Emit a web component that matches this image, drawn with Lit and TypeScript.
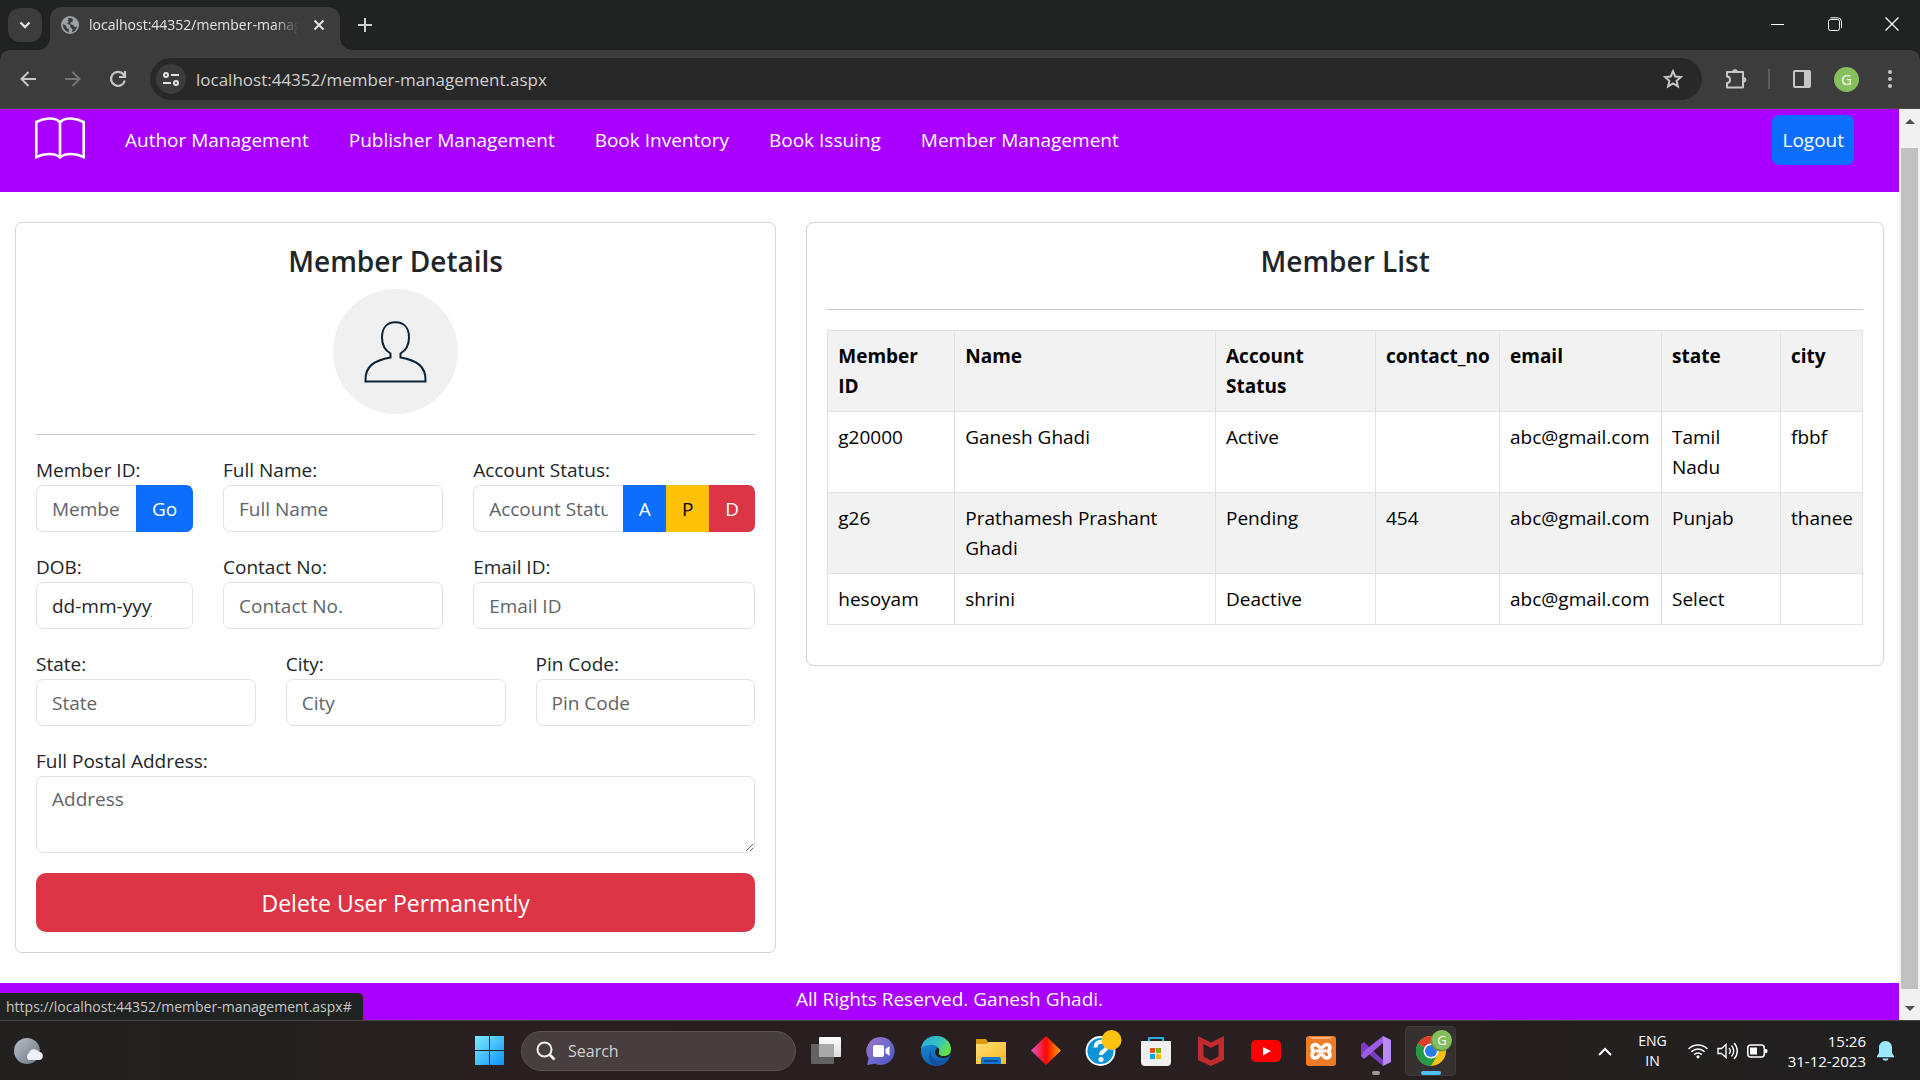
import { LitElement, html, css, svg } from "lit";
import { customElement } from "lit/decorators.js";

const base = css`
  *, *::before, *::after { box-sizing: border-box; }
  button, input, textarea { font: inherit; color: inherit; margin: 0; }
  button { border: 0; background: none; padding: 0; }
  a { color: inherit; text-decoration: none; }
  svg { display: block; flex: none; }
`;

@customElement("browser-bar")
class BrowserBar extends LitElement {
  static styles = [base, css`
    :host { display: block; background: #202322; color: #c7c7c7; font-size: 14px; }
    .tabs { display: flex; height: 50px; padding: 7px 0 0 8px; }
    .chevron { width: 34px; height: 34px; margin-top: 1px; border-radius: 12px; background: #3c3c3c; display: grid; place-items: center; }
    .tab { position: relative; display: flex; align-items: center; width: 290px; height: 43px; margin-left: 8px; padding: 0 11px 7px; gap: 10px;
      border-radius: 12px 12px 0 0; background: #3c3c3c; color: #e3e3e3; }
    .tab::before, .tab::after { content: ""; position: absolute; bottom: 0; width: 12px; height: 12px; }
    .tab::before { left: -12px; background: radial-gradient(circle at 0 0, transparent 12px, #3c3c3c 12px); }
    .tab::after { right: -12px; background: radial-gradient(circle at 100% 0, transparent 12px, #3c3c3c 12px); }
    .title { flex: 1; min-width: 0; overflow: hidden; white-space: nowrap; font-size: 14px; line-height: 36px;
      -webkit-mask-image: linear-gradient(90deg, #000 88%, transparent); mask-image: linear-gradient(90deg, #000 88%, transparent); }
    .icon { display: grid; place-items: center; width: 28px; height: 36px; }
    .tab .icon { width: 20px; }
    .plus { margin-left: 11px; }
    .window { display: flex; margin-left: auto; }
    .window .icon { width: 57px; height: 34px; }
    .tools { display: flex; align-items: center; height: 59px; padding: 0 17px 0 5px; border-radius: 10px 10px 0 0; background: #3c3c3c; border-bottom: 1px solid #4a4a4a; }
    .nav { display: flex; }
    .nav .icon { width: 45px; }
    .nav .dim { color: #757575; }
    .address { flex: 1; display: flex; align-items: center; height: 42px; margin-left: 10px; padding: 0 15px 0 6px; border-radius: 21px; background: #282828; }
    .site { width: 30px; height: 30px; border-radius: 50%; background: #3c3c3c; display: grid; place-items: center; }
    .url { flex: 1; min-width: 0; margin-left: 10px; padding: 0; border: 0; background: none; outline: 0; font-size: 17px; color: #d0d0d0; }
    .right { display: flex; align-items: center; }
    .right .icon { width: 28px; }
    .puzzle { margin-left: 20px; }
    .line { width: 2px; height: 20px; margin: 0 18px; background: #5d5d5d; }
    .face { width: 25px; height: 25px; margin: 0 18px; border-radius: 50%; background: #86c05c; color: #fff; font-size: 15px; line-height: 25px; text-align: center; }
  `];
  render() {
    return html`
      <div class="tabs">
        <button class="chevron" aria-label="Search tabs"><svg width="12" height="8" viewBox="0 0 12 8" fill="none" stroke="#e3e3e3" stroke-width="2.4"><path d="M1.500 1.500 6 6l4.500-4.500"/></svg></button>
        <div class="tab">
          <svg width="18" height="22" viewBox="0 0 18 22"><circle cx="9" cy="11" r="9" fill="#9aa0a6"/><path fill="#3c3c3c" d="M7 4.200 10 4l2 1.500-.5 2.500-2 .5v2l2.500.5 1.500 2 2.500-.5c-.5 3-2.500 5-5 6l.5-3.500-2-1.500-.5-2.500-3-1.500 2-1.500-1.500-1.500 1-1zM1.800 10l3 1.500 1 2.500 2 1.200v3C4.500 17.500 1.900 14.500 1.800 10z"/></svg>
          <span class="title">localhost:44352/member-management</span>
          <button class="icon" aria-label="Close tab"><svg width="12" height="12" viewBox="0 0 12 12" stroke="#e3e3e3" stroke-width="2"><path d="m1.500 1.500 9 9m0-9-9 9"/></svg></button>
        </div>
        <button class="icon plus" aria-label="New tab"><svg width="14" height="14" viewBox="0 0 14 14" stroke="#d0d0d0" stroke-width="2"><path d="M7 0v14M0 7h14"/></svg></button>
        <div class="window">
          <button class="icon" aria-label="Minimize"><svg width="13" height="13" stroke="#fff"><path d="M0 6.500h13"/></svg></button>
          <button class="icon" aria-label="Restore"><svg width="14" height="14" viewBox="0 0 14 14" fill="none" stroke="#fff"><rect x=".5" y="2.500" width="11" height="11" rx="2"/><path d="M2.500.8h7a4 4 0 0 1 4 4V11"/></svg></button>
          <button class="icon" aria-label="Close"><svg width="14" height="14" viewBox="0 0 14 14" stroke="#fff" stroke-width="1.200"><path d="m.5.5 13 13m0-13-13 13"/></svg></button>
        </div>
      </div>
      <div class="tools">
        <div class="nav">
          <button class="icon" aria-label="Back"><svg width="16" height="16" viewBox="0 0 16 16" fill="none" stroke="currentColor" stroke-width="2"><path d="M16 8H1.500M8.500 1l-7 7 7 7"/></svg></button>
          <button class="icon dim" aria-label="Forward"><svg width="16" height="16" viewBox="0 0 16 16" fill="none" stroke="currentColor" stroke-width="2"><path d="M0 8h14.500M7.500 1l7 7-7 7"/></svg></button>
          <button class="icon" aria-label="Reload"><svg width="18" height="18" viewBox="0 0 18 18" fill="none" stroke="currentColor" stroke-width="2.200"><path d="M15.800 10.500A7 7 0 1 1 14.500 4.500L15.500 6M16 1v6h-6"/></svg></button>
        </div>
        <div class="address">
          <button class="site" aria-label="Site information"><svg width="16" height="14" viewBox="0 0 16 14" fill="none" stroke="#e3e3e3" stroke-width="2"><circle cx="3" cy="3" r="2"/><path d="M8 3h8M0 11h8"/><circle cx="13" cy="11" r="2"/></svg></button>
          <input class="url" aria-label="Address" value="localhost:44352/member-management.aspx">
          <button class="icon" aria-label="Bookmark"><svg width="20" height="20" viewBox="0 0 20 20" fill="none" stroke="currentColor" stroke-width="2"><path d="m10 2.200 2.200 5.300 5.700.5-4.300 3.800 1.300 5.600-4.900-3-4.900 3 1.300-5.600L2.100 8l5.700-.5z"/></svg></button>
        </div>
        <div class="right">
          <button class="icon puzzle" aria-label="Extensions"><svg width="22" height="22" viewBox="0 0 22 22" fill="none" stroke="currentColor" stroke-width="2"><path d="M2 4h16v15.500H2v-4.500c4 0 4-6.500 0-6.500z" stroke-linejoin="round"/><path fill="currentColor" stroke="none" d="M7.200 4a2.800 2.800 0 0 1 5.600 0zM18.500 9a2.800 2.800 0 0 1 0 5.600z"/></svg></button>
          <span class="line"></span>
          <button class="icon" aria-label="Side panel"><svg width="18" height="18" viewBox="0 0 18 18"><rect x="1" y="1" width="16" height="16" rx="1" fill="none" stroke="currentColor" stroke-width="2"/><path fill="currentColor" d="M11 1h6v16h-6z"/></svg></button>
          <button class="face" aria-label="Profile">G</button>
          <button aria-label="Menu"><svg width="26" height="20" viewBox="0 0 26 20" fill="currentColor"><circle cx="13" cy="3" r="2"/><circle cx="13" cy="10" r="2"/><circle cx="13" cy="17" r="2"/></svg></button>
        </div>
      </div>`;
  }
}

const links = ["Author Management", "Publisher Management", "Book Inventory", "Book Issuing", "Member Management"];
const columns = ["Member\nID", "Name", "Account\nStatus", "contact_no", "email", "state", "city"];
const members = [
  ["g20000", "Ganesh Ghadi", "Active", "", "abc@gmail.com", "Tamil Nadu", "fbbf"],
  ["g26", "Prathamesh Prashant Ghadi", "Pending", "454", "abc@gmail.com", "Punjab", "thanee"],
  ["hesoyam", "shrini", "Deactive", "", "abc@gmail.com", "Select", ""],
];

@customElement("member-page")
class MemberPage extends LitElement {
  static styles = [base, css`
    :host { position: relative; display: flex; background: #fff; color: #212529; font-size: 19px; line-height: 30px; }
    .page { flex: 1; min-width: 0; display: flex; flex-direction: column; }
    .top { display: flex; align-items: center; gap: 40px; padding: 6px 45px 27px 35px; background: #a0f; color: #fff; }
    .links { display: flex; gap: 40px; flex: 1; }
    .logout { height: 50px; padding: 0 10px; border-radius: 7px; background: #0d6efd; }
    .main { flex: 1; display: grid; grid-template-columns: 5fr 7fr; align-items: start; padding: 30px 0; }
    .card { margin: 0 15px; padding: 20px; border: 1px solid #d3d4d5; border-radius: 7px; min-width: 0; }
    h4 { margin: 0 0 10px; font-size: 28px; line-height: 36px; font-weight: 600; text-align: center; }
    .person { margin: 0 auto; }
    hr { height: 1px; margin: 20px 0; border: 0; background: #c8c9ca; }
    .spaced { margin-top: 30px; }
    .row { display: grid; gap: 30px; margin-bottom: 20px; }
    .wide { grid-template-columns: 157fr 220fr 282fr; }
    .even { grid-template-columns: repeat(3, 1fr); }
    .field { display: flex; flex-direction: column; min-width: 0; }
    .field label { white-space: nowrap; }
    .box { width: 100%; min-width: 0; height: 47px; padding: 7px 15px; border: 1px solid #dee2e6; border-radius: 7px; background: #fff; outline: 0; }
    .box::placeholder { color: #5f6468; opacity: 1; }
    .date { padding-right: 40px; }
    .area { display: block; height: 77px; resize: vertical; }
    .group { display: flex; height: 47px; }
    .group .box { flex: 1; width: 0; border-radius: 7px 0 0 7px; border-right: 0; }
    .group button { flex: none; width: 43px; }
    .group .go { width: 57px; }
    .group .red { width: 46px; }
    .group button:last-child { border-radius: 0 7px 7px 0; }
    .blue { background: #0d6efd; color: #fff; }
    .amber { background: #ffc107; color: #000; }
    .red { background: #dc3545; color: #fff; }
    .delete { width: 100%; height: 59px; border-radius: 10px; font-size: 23px; }
    table { width: 100%; margin-bottom: 20px; border-collapse: collapse; table-layout: fixed; color: #000; }
    th, td { padding: 10px; border: 1px solid #dee2e6; text-align: left; vertical-align: top; }
    th { padding-right: 0; font-weight: 700; white-space: pre-line; }
    tr:nth-child(odd) { background: #f2f2f2; }
    .c0 { width: 127px; } .c2 { width: 160px; } .c3 { width: 124px; } .c4 { width: 162px; } .c5 { width: 119px; } .c6 { width: 82px; }
    footer { height: 37px; padding-top: 1px; background: #a0f; color: #fff; text-align: center; }
    .scroll { display: flex; flex-direction: column; align-items: center; justify-content: space-between; width: 21px; padding: 10px 0 9px; background: #f1f1f1; }
    .thumb { flex: 1; width: 17px; margin: 24px 0 17px; background: #c1c1c1; }
    .status { position: absolute; left: 0; bottom: 0; padding: 0 11px 0 6px; border-radius: 0 5px 0 0; background: #202322; color: #c7c7c7; font-size: 14px; line-height: 27px; }
  `];
  field(id: string, label: string, hint: string) {
    return html`<div class="field"><label for=${id}>${label}</label><input class="box" id=${id} placeholder=${hint}></div>`;
  }
  render() {
    return html`
      <div class="page">
        <nav class="top">
          <svg width="50" height="50" viewBox="0 0 50 50" fill="none" stroke="#fff" stroke-width="2.600"><path d="M1.300 42V7C9 2.800 20 1.800 25 7.300 30 1.800 41 2.800 48.700 7V42C40 38 30 38 25 42.500 20 38 10 38 1.300 42zM25 7V42"/></svg>
          <div class="links">${links.map((l) => html`<a href="#">${l}</a>`)}</div>
          <button class="logout">Logout</button>
        </nav>
        <main class="main">
          <section class="card">
            <h4>Member Details</h4>
            <svg class="person" width="125" height="125" viewBox="0 0 125 125"><circle cx="62.500" cy="62.500" r="62.500" fill="#f0f0f0"/><path fill="none" stroke="#0b2135" stroke-width="2" d="M57.500 68.500V64.500C51.500 61 49 54.500 49 48.500 49 39 54 33.300 62.500 33.300 71 33.300 76 39 76 48.500 76 54.500 73.500 61 67.500 64.500V68.500C84 71.500 92.500 77 92.500 91V92.500H32.500V91C32.500 77 41 71.500 57.500 68.500z"/></svg>
            <hr>
            <div class="row wide">
              <div class="field"><label for="mid">Member ID:</label><div class="group"><input class="box" id="mid" placeholder="Member ID"><button class="blue go">Go</button></div></div>
              ${this.field("name", "Full Name:", "Full Name")}
              <div class="field"><label for="acc">Account Status:</label><div class="group"><input class="box" id="acc" placeholder="Account Status"><button class="blue">A</button><button class="amber">P</button><button class="red">D</button></div></div>
            </div>
            <div class="row wide">
              <div class="field"><label for="dob">DOB:</label><input class="box date" id="dob" value="dd-mm-yyyy"></div>
              ${this.field("tel", "Contact No:", "Contact No.")}
              ${this.field("mail", "Email ID:", "Email ID")}
            </div>
            <div class="row even">
              ${this.field("state", "State:", "State")}
              ${this.field("city", "City:", "City")}
              ${this.field("pin", "Pin Code:", "Pin Code")}
            </div>
            <div class="row">
              <div class="field"><label for="addr">Full Postal Address:</label><textarea class="box area" id="addr" placeholder="Address"></textarea></div>
            </div>
            <button class="delete red">Delete User Permanently</button>
          </section>
          <section class="card">
            <h4>Member List</h4>
            <hr class="spaced">
            <table>
              <colgroup>${columns.map((_, i) => html`<col class="c${i}">`)}</colgroup>
              <tbody>
                <tr>${columns.map((c) => html`<th scope="col">${c}</th>`)}</tr>
                ${members.map((m) => html`<tr>${m.map((v) => html`<td>${v}</td>`)}</tr>`)}
              </tbody>
            </table>
          </section>
        </main>
        <footer>All Rights Reserved. Ganesh Ghadi.</footer>
      </div>
      <div class="scroll">
        <svg width="10" height="5" fill="#505050"><path d="M0 5 5 0l5 5z"/></svg>
        <div class="thumb"></div>
        <svg width="10" height="5" fill="#505050"><path d="M0 0h10L5 5z"/></svg>
      </div>
      <div class="status">https://localhost:44352/member-management.aspx#</div>`;
  }
}

const apps = [
  { name: "Task view", art: svg`<defs><linearGradient id="tv" x2="0" y2="1"><stop stop-color="#fff"/><stop offset="1" stop-color="#ddd"/></linearGradient></defs><rect x="8" y="1" width="22" height="20" rx="1" fill="url(#tv)"/><rect x="0" y="8" width="23" height="20" rx="1" fill="#626262"/><path fill="#a9a9a9" d="M8 8h15v13H8z"/>` },
  { name: "Chat", art: svg`<defs><linearGradient id="ch" x2="1" y2="1"><stop stop-color="#a573c4"/><stop offset=".5" stop-color="#6f6bd0"/><stop offset="1" stop-color="#4a52bd"/></linearGradient></defs><path fill="url(#ch)" d="M15 1a14 14 0 1 1-6 26.800L1 29l1.600-6.500A14 14 0 0 1 15 1z"/><rect x="7" y="9" width="11" height="12" rx="2" fill="#fff"/><path fill="#fff" d="m19.500 13 4-3v10l-4-3z"/>` },
  { name: "Edge", art: svg`<defs><linearGradient id="e1" x2="1" y2=".5"><stop stop-color="#2aa6d8"/><stop offset=".6" stop-color="#35c5bf"/><stop offset="1" stop-color="#65e04c"/></linearGradient><linearGradient id="e2" x2=".4" y2="1"><stop stop-color="#1b95d8"/><stop offset="1" stop-color="#0a5fb0"/></linearGradient></defs><circle cx="15" cy="15" r="15" fill="url(#e2)"/><path fill="#291f20" d="M30 16c0 3-3 6-8 6s-8-3-8-6c0-2 1-3 2.500-4L30 8z"/><path fill="url(#e1)" d="M0 13C1 5 7 0 15 0c9 0 15 6 15 13 0 5-3 7-7 7-4 0-6-2-5-4s0-7-7-7C6 9 2 10 0 13z"/><path fill="#14529b" d="M10 15c-1 6 4 10 9 10 4 0 6-1 9-2-3 5-8 7-13 7C8 28 6 20 10 15z"/><path fill="#291f20" d="M28 23c1-1 2-2 2.500-4V30H22c3-1 5-4 6-7z"/>` },
  { name: "File Explorer", art: svg`<path fill="#d89b0a" d="M0 3h10l2 3v5H0z"/><defs><linearGradient id="fo" x2="1" y2="1"><stop stop-color="#ffe07a"/><stop offset="1" stop-color="#f8b91a"/></linearGradient></defs><path fill="url(#fo)" d="M0 8h10l3-2h17v22H0z"/><path fill="#1278d0" d="M5 28v-5q0-2 2-2h16q2 0 2 2v5z"/><path fill="#0a4d92" d="M8 24h14v2H8z"/>` },
  { name: "Diamond", art: svg`<defs><linearGradient id="di"><stop stop-color="#e45ad0"/><stop offset=".48" stop-color="#fa0a0a"/><stop offset=".55" stop-color="#ff1500"/><stop offset="1" stop-color="#ffa500"/></linearGradient></defs><path fill="url(#di)" d="m15 0 15 14.500L15 29 0 14.500z"/>` },
  { name: "Help", art: svg`<circle cx="14.500" cy="15" r="14" fill="#0a95d8" stroke="#fff" stroke-width="1.800"/><path d="M9.500 11.500c0-8 11.500-7.500 11 0-.5 4-5.500 3-5.500 7.500" fill="none" stroke="#fff" stroke-width="4"/><circle cx="15" cy="23.500" r="2.500" fill="#fff"/><circle cx="25.500" cy="4" r="10" fill="#ffc20e"/>` },
  { name: "Store", art: svg`<path d="M8 7V2h14v5" fill="none" stroke="#22aee8" stroke-width="2"/><path fill="#f0f0f0" d="M0 5h30v21q0 4-4 4H4q-4 0-4-4z"/><path fill="#f25022" d="M9 12h5v5H9z"/><path fill="#7fba00" d="M15 12h5v5h-5z"/><path fill="#00a4ef" d="M9 18h5v5H9z"/><path fill="#ffb900" d="M15 18h5v5h-5z"/>` },
  { name: "McAfee", art: svg`<path fill="#c22b2e" d="m2 0 13 6.500L28 0v24l-13 6-13-6zm5.500 8v12.500l7.500 4 7.500-4V8L15 12z"/>` },
  { name: "YouTube", art: svg`<rect y="4" width="30" height="22" rx="5" fill="#f00"/><path fill="#fff" d="m12 11 8 4-8 4.500z"/>` },
  { name: "XAMPP", art: svg`<rect width="30" height="30" rx="3" fill="#ee7b28"/><path fill="#f9b27d" d="M3 1h24l-3 2H6z"/><path fill="none" stroke="#fff" stroke-width="3.600" stroke-linejoin="round" d="M9.500 8.500c3 0 3 3.500 5.500 3.500s2.500-3.500 5.500-3.500c4 0 4.500 4.500 1.500 6.500 3 2.500 2.500 7-1.500 7-3.500 0-3-4-5.500-4s-2 4-5.500 4c-4 0-4.500-4.500-1.500-7-3-2-2.500-6.500 1.500-6.500z"/><path fill="#fff" d="M10 13.500h10v3H10z"/>` },
  { name: "Visual Studio", mark: "idle", art: svg`<path fill="#7a3cc0" d="m0 8 3-2 19 18v6L3 14v8l-3-2z"/><path fill="#9a5ce0" d="m0 20 3 3L22 7V0L3 15z"/><path fill="#b98af5" d="m22 0 8 4v22l-8 4z"/>` },
  { name: "Chrome", mark: "active", art: svg`<circle cx="15" cy="15" r="15" fill="#fbc116"/><path fill="#e33b2e" d="M15 15 2 7.500A15 15 0 0 1 28 7.500H15z"/><path fill="#229a48" d="M15 15 2 7.500A15 15 0 0 0 15 30l6.500-11.500z"/><circle cx="15" cy="15" r="7.500" fill="#fff"/><circle cx="15" cy="15" r="6" fill="#2a7bf0"/><circle cx="25" cy="5" r="10.500" fill="#5f9a3c"/><circle cx="26" cy="4" r="10" fill="#86c05c"/><text x="26" y="9" text-anchor="middle" font-size="13" fill="#fff">G</text>` },
];

@customElement("task-bar")
class TaskBar extends LitElement {
  static styles = [base, css`
    :host { display: grid; grid-template-columns: 1fr auto 1fr; align-items: center; height: 60px; border-top: 1px solid #454545;
      background: linear-gradient(90deg, #222120, #2a1f20 35%, #2a1f20 65%, #202020); color: #fff; font-size: 14px; line-height: 20px; }
    .weather { margin-left: 14px; }
    .apps { display: flex; align-items: center; }
    .app { position: relative; display: grid; place-items: center; width: 51px; height: 50px; margin: 0 2px; border-radius: 5px; }
    .app svg { overflow: visible; }
    .active { background: #363031; box-shadow: inset 0 0 0 1px #403a3b; }
    .idle::after, .active::after { content: ""; position: absolute; bottom: 1px; height: 4px; border-radius: 2px; width: 8px; background: #9a9696; }
    .active::after { width: 20px; background: #4cc2ff; }
    .search { display: flex; align-items: center; width: 275px; height: 40px; margin: 0 2px 0 4px; padding: 0 14px; gap: 12px; border-radius: 20px; background: #463e3f; border: 1px solid #5b5455; }
    .search input { flex: 1; min-width: 0; padding: 0; border: 0; background: none; outline: 0; font-size: 16px; }
    .search input::placeholder { color: #d4d0d0; opacity: 1; }
    .tray { display: flex; align-items: center; justify-content: flex-end; padding-right: 26px; }
    .lang { margin: 0 21px 0 26px; text-align: center; }
    .status { display: flex; align-items: center; gap: 9px; margin-right: 20px; }
    .clock { margin-right: 11px; text-align: right; font-size: 15px; }
  `];
  render() {
    return html`
      <svg class="weather" width="30" height="28" viewBox="0 0 30 28"><defs><linearGradient id="mo" x2="1" y2="1"><stop stop-color="#b8c0cc"/><stop offset="1" stop-color="#6c747e"/></linearGradient></defs><circle cx="13" cy="14" r="13" fill="url(#mo)"/><path fill="#eef1f5" d="M15 23a4 4 0 0 1 0-7 5.500 5.500 0 0 1 10-1 4 4 0 0 1-.5 8z"/></svg>
      <div class="apps">
        <button class="app" aria-label="Start"><svg width="30" height="30" viewBox="0 0 30 30"><defs><linearGradient id="wi" gradientUnits="userSpaceOnUse" x2="30" y2="30"><stop stop-color="#7deaff"/><stop offset="1" stop-color="#0a90f8"/></linearGradient></defs><path fill="url(#wi)" d="M0 0h14v14H0zM15 0h14v14H15zM0 15h14v14H0zM15 15h14v14H15z"/></svg></button>
        <label class="search"><svg width="20" height="20" viewBox="0 0 20 20" fill="none" stroke="#f0f0f0" stroke-width="2"><circle cx="8.500" cy="8.500" r="7"/><path stroke-width="2.600" d="m13.500 13.500 5 5"/></svg><input placeholder="Search" aria-label="Search"></label>
        ${apps.map((a) => html`<button class="app ${a.mark ?? ""}" aria-label=${a.name}><svg width="30" height="30" viewBox="0 0 30 30">${a.art}</svg></button>`)}
      </div>
      <div class="tray">
        <svg width="14" height="9" viewBox="0 0 14 9" fill="none" stroke="#fff" stroke-width="2"><path d="m1 8 6-6 6 6"/></svg>
        <div class="lang">ENG<br>IN</div>
        <div class="status">
          <svg width="20" height="16" viewBox="0 0 20 16" fill="none" stroke="#fff" stroke-width="1.500"><path d="M.6 6a13.300 13.300 0 0 1 18.800 0M3.400 8.800a9.300 9.300 0 0 1 13.200 0M6.200 11.600a5.400 5.400 0 0 1 7.600 0"/><circle cx="10" cy="13.800" r="1.600" fill="#fff" stroke="none"/></svg>
          <svg width="21" height="18" viewBox="0 0 21 18" fill="none" stroke="#fff" stroke-width="1.400"><path d="M1 6.500h3.500L9 2.500v13l-4.500-4H1z"/><path d="M12 6a4.500 4.500 0 0 1 0 6M14.500 3.500a8 8 0 0 1 0 11M17 1a11.500 11.500 0 0 1 0 16"/></svg>
          <svg width="21" height="14" viewBox="0 0 21 14"><rect x=".8" y="1" width="16.500" height="12" rx="3" fill="none" stroke="#fff" stroke-width="1.500"/><path fill="#fff" d="M3 3.500h7v7H3zM18 5h1.500q1 0 1 2t-1 2H18z"/></svg>
        </div>
        <div class="clock">15:26<br>31-12-2023</div>
        <svg width="17" height="20" viewBox="0 0 17 20" fill="#9ce8ff"><path d="M8.500 0C4.500 0 2 3 2 6.500V12L0 15v1.300h17V15l-2-3V6.500C15 3 12.500 0 8.500 0zM5.500 17.500h6c-.5 3-5.500 3-6 0z"/></svg>
      </div>`;
  }
}

@customElement("app-root")
class AppRoot extends LitElement {
  static styles = css`
    :host { display: flex; flex-direction: column; min-height: 100vh; font-family: "Open Sans", "Noto Sans", sans-serif; }
    member-page { flex: 1; }
  `;
  render() {
    return html`<browser-bar></browser-bar><member-page></member-page><task-bar></task-bar>`;
  }
}
